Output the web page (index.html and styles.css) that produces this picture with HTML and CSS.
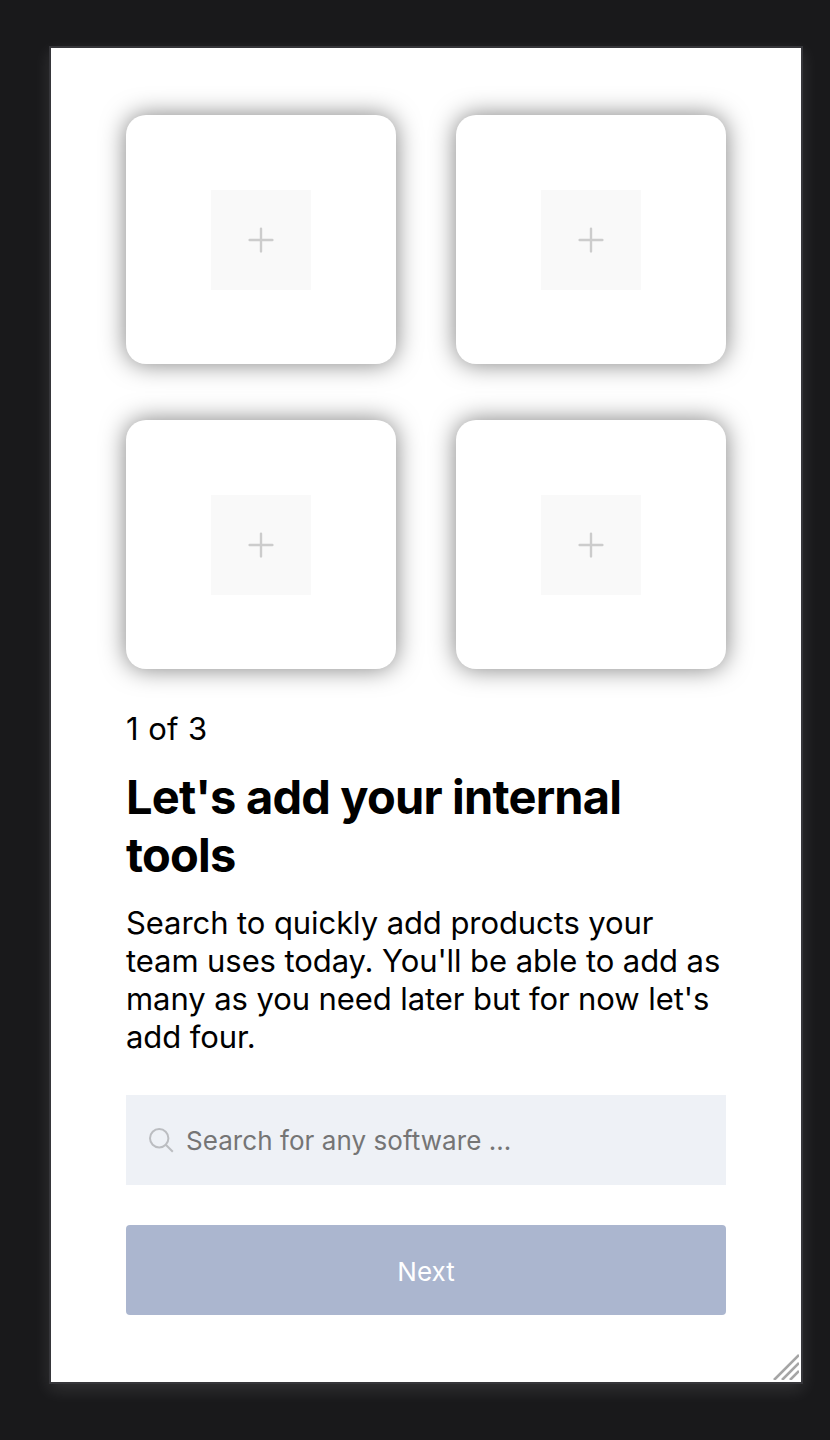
FILE: index.html
```html
<!DOCTYPE html>
<html lang="en">
<head>
<meta charset="utf-8">
<title>Add your internal tools</title>
<link rel="stylesheet" href="styles.css">
</head>
<body>
<main class="device">
  <section class="slots">
    <div class="card"><button class="add" aria-label="Add tool"><svg class="plus" viewBox="0 0 28 28"><path d="M14 2.6v22.8M2.6 14h22.8"/></svg></button></div>
    <div class="card"><button class="add" aria-label="Add tool"><svg class="plus" viewBox="0 0 28 28"><path d="M14 2.6v22.8M2.6 14h22.8"/></svg></button></div>
    <div class="card"><button class="add" aria-label="Add tool"><svg class="plus" viewBox="0 0 28 28"><path d="M14 2.6v22.8M2.6 14h22.8"/></svg></button></div>
    <div class="card"><button class="add" aria-label="Add tool"><svg class="plus" viewBox="0 0 28 28"><path d="M14 2.6v22.8M2.6 14h22.8"/></svg></button></div>
  </section>
  <p class="step">1 of 3</p>
  <h1 class="title">Let's add your internal<br>tools</h1>
  <p class="intro">Search to quickly add products your<br>team uses today. You'll be able to add as<br>many as you need later but for now let's<br>add four.</p>
  <label class="search">
    <svg class="lens" viewBox="0 0 26 26"><circle cx="11.2" cy="11.2" r="9.2"/><path d="M17.8 17.8 24.8 24.8"/></svg>
    <span class="placeholder">Search for any software ...</span>
  </label>
  <button class="next">Next</button>
  <svg class="grip" viewBox="0 0 26 26"><path d="M1 26 26 1M9 26 26 9M17 26 26 17"/></svg>
</main>
</body>
</html>
```
FILE: styles.css
```css
* { box-sizing: border-box; }
body {
  margin: 0;
  height: 1440px;
  padding: 46px 27px 0 49px;
  background: #19191b;
  font-family: Inter, "Liberation Sans", sans-serif;
  color: #000;
  overflow: hidden;
}
.device {
  position: relative;
  display: flex;
  flex-direction: column;
  width: 754px;
  height: 1338px;
  padding: 67px 75px 0;
  border: 2px solid #36363a;
  background: #fff;
  box-shadow: 0 6px 16px rgba(255, 255, 255, .11);
}
.slots {
  display: grid;
  grid-template-columns: 270px 270px;
  grid-auto-rows: 249px;
  gap: 56px 60px;
}
.card {
  display: flex;
  justify-content: center;
  padding-top: 75px;
  border-radius: 20px;
  background: #fff;
  box-shadow: 0 0 25px rgba(0, 0, 0, .5);
}
.add {
  display: grid;
  place-items: center;
  width: 100px;
  height: 100px;
  padding: 0;
  border: 0;
  background: #f9f9f9;
}
.plus {
  width: 28px;
  height: 28px;
  fill: none;
  stroke: #ccc;
  stroke-width: 2.4;
  stroke-linecap: round;
}
.step {
  margin: 41px 0 0;
  font-size: 31px;
  line-height: 38px;
  letter-spacing: .4px;
}
.title {
  margin: 20px 0 0;
  font-size: 47px;
  font-weight: 700;
  line-height: 58px;
  letter-spacing: -.81px;
  white-space: nowrap;
}
.intro {
  margin: 20px 0 0;
  font-size: 31px;
  line-height: 38px;
  letter-spacing: -.08px;
  white-space: nowrap;
}
.search {
  display: flex;
  align-items: center;
  height: 90px;
  margin-top: 39px;
  padding-left: 22px;
  background: #eef1f6;
}
.lens {
  width: 26px;
  height: 26px;
  margin-right: 12px;
  fill: none;
  stroke: #bbbdc1;
  stroke-width: 2;
}
.placeholder {
  font-size: 26px;
  letter-spacing: .06px;
  color: #757575;
}
.next {
  height: 90px;
  margin-top: 40px;
  padding: 2px 0 0;
  border: 0;
  border-radius: 4px;
  background: #abb6cf;
  color: #fff;
  font: 400 26px Inter, "Liberation Sans", sans-serif;
}
.grip {
  position: absolute;
  right: 2px;
  bottom: 2px;
  width: 26px;
  height: 26px;
  fill: none;
  stroke: #a5a5a5;
  stroke-width: 2.6;
}
```
